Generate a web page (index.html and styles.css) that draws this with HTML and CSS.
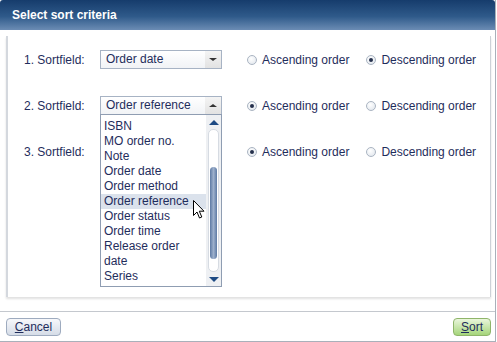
FILE: index.html
```html
<!DOCTYPE html>
<html lang="en">
<head>
    <meta charset="UTF-8">
    <title>Select sort criteria</title>
    <link rel="stylesheet" href="styles.css">
</head>
<body>
    <div class="dialog">
        <div class="titlebar">Select sort criteria</div>
        <div class="panel">
            <div class="row">
                <span class="label">1. Sortfield:</span>
                <div class="select">
                    <span class="select-text">Order date</span>
                    <span class="select-btn"><span class="tri-down"></span></span>
                </div>
                <span class="radio"></span><span class="radio-text">Ascending order</span>
                <span class="radio checked second"></span><span class="radio-text">Descending order</span>
            </div>
            <div class="row">
                <span class="label">2. Sortfield:</span>
                <div class="select open">
                    <span class="select-text">Order reference</span>
                    <span class="select-btn"><span class="tri-up"></span></span>
                    <div class="list">
                        <div class="items">
                            <div class="item">ID no.</div>
                            <div class="item">ISBN</div>
                            <div class="item">MO order no.</div>
                            <div class="item">Note</div>
                            <div class="item">Order date</div>
                            <div class="item">Order method</div>
                            <div class="item active">Order reference</div>
                            <div class="item">Order status</div>
                            <div class="item">Order time</div>
                            <div class="item">Release order</div>
                            <div class="item">date</div>
                            <div class="item">Series</div>
                        </div>
                        <div class="scrollbar">
                            <span class="sb-arrow"><span class="sb-up"></span></span>
                            <span class="sb-track"><span class="sb-thumb"></span></span>
                            <span class="sb-arrow"><span class="sb-down"></span></span>
                        </div>
                        <svg class="cursor" width="13" height="20" viewBox="0 0 13 20">
                            <path d="M0.5 0.5 L0.5 15.5 L4 12 L6.5 18 L8.8 17 L6.3 11.2 L11 11.2 Z" fill="#fff" stroke="#000" stroke-width="1"/>
                        </svg>
                    </div>
                </div>
                <span class="radio checked"></span><span class="radio-text">Ascending order</span>
                <span class="radio second"></span><span class="radio-text">Descending order</span>
            </div>
            <div class="row">
                <span class="label">3. Sortfield:</span>
                <div class="select">
                    <span class="select-text"></span>
                    <span class="select-btn"><span class="tri-down"></span></span>
                </div>
                <span class="radio checked"></span><span class="radio-text">Ascending order</span>
                <span class="radio second"></span><span class="radio-text">Descending order</span>
            </div>
        </div>
        <div class="footer">
            <button class="btn cancel"><u>C</u>ancel</button>
            <button class="btn sort"><u>S</u>ort</button>
        </div>
    </div>
</body>
</html>
```

FILE: styles.css
```css
* {
    margin: 0;
    padding: 0;
    box-sizing: border-box;
}
body {
    width: 497px;
    height: 342px;
    overflow: hidden;
    background: #fff;
    font-family: 'Liberation Sans', Arial, sans-serif;
    font-size: 12px;
    color: #1f2d5c;
}
.dialog {
    width: 496px;
    height: 342px;
    border-right: 1px solid #a9b0ba;
    border-bottom: 1px solid #a9b0ba;
    background: #fff;
}
.titlebar {
    height: 30px;
    padding-left: 12px;
    line-height: 30px;
    font-weight: bold;
    color: #fff;
    border-radius: 3px 3px 0 0;
    background: linear-gradient(#163c6c, #2f5a8a 55%, #6b8cb4);
}
.panel {
    margin: 6px 4px 0 6px;
    height: 261px;
    padding: 12px 0 0 16px;
    border-left: 2px solid #d4d8de;
    border-right: 1px solid #cdd1d7;
    box-shadow: 0 2px 2px rgba(0, 0, 0, 0.12);
}
.row {
    display: flex;
    align-items: center;
    height: 23px;
    margin-bottom: 23px;
}
.label {
    width: 76px;
}
.select {
    position: relative;
    width: 122px;
    height: 19px;
    display: flex;
    border: 1px solid #a7b3c4;
    background: linear-gradient(#fff, #f1f3f6);
    margin-right: 25px;
}
.select-text {
    flex: 1;
    padding-left: 5px;
    line-height: 17px;
}
.select-btn {
    width: 16px;
    display: flex;
    align-items: center;
    justify-content: center;
    background: linear-gradient(#f4f4f4, #e2e2e2);
}
.tri-down {
    border-left: 4px solid transparent;
    border-right: 4px solid transparent;
    border-top: 3px solid #333;
}
.tri-up {
    border-left: 4px solid transparent;
    border-right: 4px solid transparent;
    border-bottom: 3px solid #333;
}
.list {
    position: absolute;
    top: 17px;
    left: -1px;
    width: 122px;
    height: 173px;
    border: 1px solid #8f9db2;
    background: #fff;
    overflow: hidden;
    z-index: 2;
}
.items {
    margin-top: -11px;
    margin-right: 15px;
}
.item {
    height: 15px;
    line-height: 15px;
    padding-left: 3px;
    white-space: nowrap;
}
.item.active {
    background: #dbe2ec;
}
.scrollbar {
    position: absolute;
    top: 0;
    right: 0;
    width: 15px;
    height: 100%;
    display: flex;
    flex-direction: column;
    align-items: center;
    background: #eef0f3;
}
.sb-arrow {
    height: 14px;
    display: flex;
    align-items: center;
}
.sb-up {
    border-left: 5px solid transparent;
    border-right: 5px solid transparent;
    border-bottom: 5px solid #1d4a84;
}
.sb-down {
    border-left: 5px solid transparent;
    border-right: 5px solid transparent;
    border-top: 5px solid #1d4a84;
}
.sb-track {
    flex: 1;
    width: 11px;
    padding: 37px 1px 12px;
    border-radius: 5px;
    background: #fff;
    border: 1px solid #d6dbe2;
}
.sb-thumb {
    display: block;
    height: 100%;
    border-radius: 4px;
    background: linear-gradient(90deg, #5d7aa4, #9db0cc 50%, #5d7aa4);
}
.cursor {
    position: absolute;
    left: 92px;
    top: 85px;
}
.radio {
    width: 10px;
    height: 10px;
    border-radius: 50%;
    border: 1px solid #aab4c2;
    background: radial-gradient(circle at 40% 35%, #fff, #dde3ea);
    margin-right: 5px;
    display: flex;
    align-items: center;
    justify-content: center;
}
.radio.second {
    margin-left: 17px;
}
.radio.checked::after {
    content: "";
    width: 4px;
    height: 4px;
    border-radius: 50%;
    background: #25304c;
}
.footer {
    margin-top: 14px;
    height: 31px;
    border-top: 1px solid #c4c8ce;
    padding: 6px 4px 0 6px;
    display: flex;
    justify-content: space-between;
}
.btn {
    height: 18px;
    font-family: 'Liberation Sans', Arial, sans-serif;
    font-size: 12px;
    color: #1f2d5c;
    border-radius: 4px;
    padding: 0 6px;
    line-height: 16px;
}
.cancel {
    width: 55px;
    border: 1px solid #9eabbf;
    background: linear-gradient(#f7f8fb, #d5dce7);
}
.sort {
    width: 38px;
    border: 1px solid #8fb56a;
    background: linear-gradient(#eaf6dc, #a5d57a);
}
```
